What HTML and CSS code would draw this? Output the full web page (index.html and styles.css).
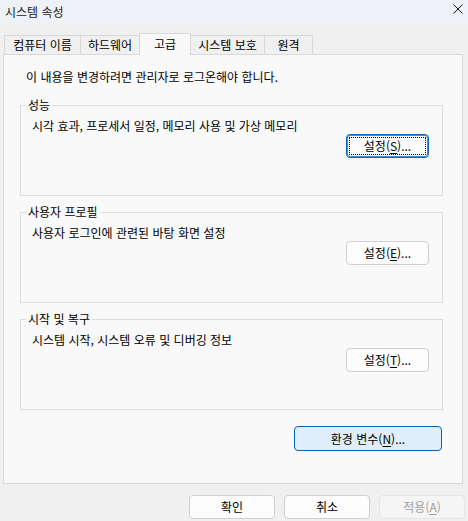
FILE: index.html
```html
<!DOCTYPE html>
<html lang="ko">
<head>
<meta charset="utf-8">
<link rel="stylesheet" href="styles.css">
</head>
<body>
<div class="window">
  <div class="titlebar">
    <span class="title">시스템 속성</span>
    <span class="close">
      <svg width="10" height="10" viewBox="0 0 10 10"><path d="M0.5 0.5L9.5 9.5M9.5 0.5L0.5 9.5" stroke="#1a1a1a" stroke-width="1" fill="none"/></svg>
    </span>
  </div>
  <div class="tabs">
    <div class="tab">컴퓨터 이름</div>
    <div class="tab">하드웨어</div>
    <div class="tab active">고급</div>
    <div class="tab">시스템 보호</div>
    <div class="tab">원격</div>
  </div>
  <div class="panel">
    <p class="intro">이 내용을 변경하려면 관리자로 로그온해야 합니다.</p>
    <fieldset class="group">
      <legend>성능</legend>
      <p class="desc">시각 효과, 프로세서 일정, 메모리 사용 및 가상 메모리</p>
      <div class="row"><button class="btn btn-set default">설정(<u>S</u>)...</button></div>
    </fieldset>
    <fieldset class="group">
      <legend>사용자 프로필</legend>
      <p class="desc">사용자 로그인에 관련된 바탕 화면 설정</p>
      <div class="row"><button class="btn btn-set">설정(<u>E</u>)...</button></div>
    </fieldset>
    <fieldset class="group">
      <legend>시작 및 복구</legend>
      <p class="desc">시스템 시작, 시스템 오류 및 디버깅 정보</p>
      <div class="row"><button class="btn btn-set">설정(<u>T</u>)...</button></div>
    </fieldset>
    <div class="row env-row"><button class="btn btn-env">환경 변수(<u>N</u>)...</button></div>
  </div>
  <div class="footer">
    <button class="btn btn-foot">확인</button>
    <button class="btn btn-foot">취소</button>
    <button class="btn btn-foot disabled">적용(<u>A</u>)</button>
  </div>
</div>
</body>
</html>
```

FILE: styles.css
```css
* { box-sizing: border-box; }
html, body { margin: 0; padding: 0; }
body {
  width: 468px;
  height: 521px;
  background: #f0f0f0;
  font-family: "Noto Sans CJK KR", "Liberation Sans", sans-serif;
  font-size: 12px;
  line-height: 16px;
  color: #000;
  overflow: hidden;
}
.window { display: flex; flex-direction: column; height: 521px; }
.titlebar {
  height: 25px;
  background: #eef2f7;
  display: flex;
  align-items: center;
  justify-content: space-between;
  padding: 0 5px 1px 5px;
}
.title { color: #1a1a1a; }
.close { display: flex; width: 10px; height: 10px; margin-bottom: 6px; }
.tabs {
  margin-top: 8px;
  padding-left: 4px;
  display: grid;
  grid-template-columns: 76px 59px 51px 74px 48px;
  align-items: end;
  height: 21px;
}
.tab {
  height: 19px;
  margin-right: -1px;
  border: 1px solid #d9d9d9;
  border-bottom: none;
  background: #f0f0f0;
  display: flex;
  align-items: center;
  justify-content: center;
  line-height: 16px;
  white-space: nowrap;
}
.tab.active {
  height: 22px;
  margin-bottom: -1px;
  background: #f9f9f9;
  position: relative;
  z-index: 1;
  padding-bottom: 2px;
}
.panel {
  margin: 0 5px 0 3px;
  height: 430px;
  border: 1px solid #d9d9d9;
  background: #f9f9f9;
  padding: 14px 19px 0 16px;
  display: flex;
  flex-direction: column;
}
.intro { margin: 0 0 12px 6px; }
.group {
  margin: 0;
  border: 1px solid #dcdcdc;
  padding: 5px 13px 11px 5px;
  min-width: 0;
  height: 99px;
  display: flex;
  flex-direction: column;
}
.group + .group { margin-top: 8px; }
.group legend { padding: 0 2px; line-height: 16px; }
.desc { margin: 0 0 0 6px; }
.row { display: flex; justify-content: flex-end; margin-top: auto; }
.btn {
  font: inherit;
  color: #000;
  background: #fdfdfd;
  border: 1px solid #d0d0d0;
  border-radius: 4px;
  padding: 0;
  display: flex;
  align-items: center;
  justify-content: center;
  line-height: 16px;
}
.btn u { text-underline-offset: 2px; }
.btn-set { width: 83px; height: 24px; }
.btn.default {
  border-color: #0067c0;
  box-shadow: inset 0 0 0 1px #4a90d0;
  outline: 1px dotted #000;
  outline-offset: -4px;
}
.env-row { margin-top: 16px; margin-right: 1px; }
.btn-env {
  width: 148px;
  height: 25px;
  background: #e0eef9;
  border-color: #0067c0;
}
.footer {
  display: flex;
  justify-content: flex-end;
  gap: 9px;
  padding: 11px 3px 0 0;
}
.btn-foot { width: 86px; height: 24px; }
.btn-foot.disabled {
  color: #a0a0a0;
  background: #f5f5f5;
  border-color: #e5e5e5;
}
```
